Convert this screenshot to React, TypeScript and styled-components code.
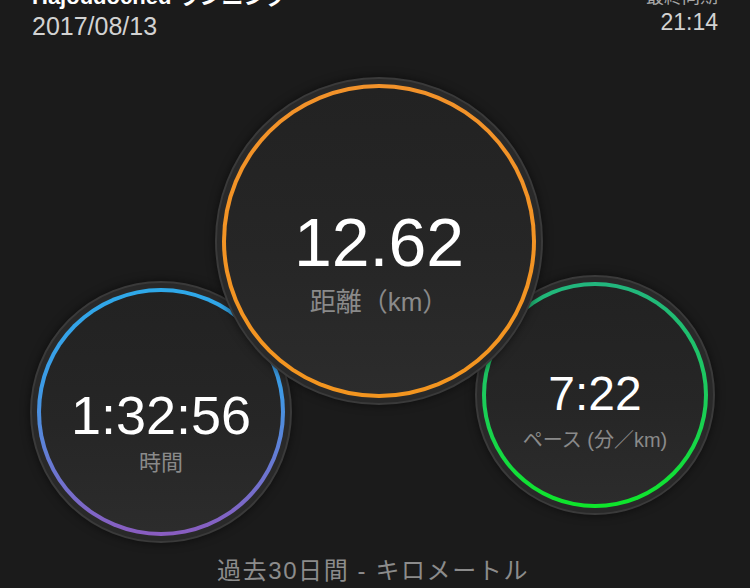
import React from "react";
import styled, { createGlobalStyle } from "styled-components";

const GlobalStyle = createGlobalStyle`
  html, body {
    margin: 0;
    padding: 0;
    background: #1b1b1b;
  }
  body {
    width: 750px;
    height: 588px;
    overflow: hidden;
    font-family: "Liberation Sans", "Noto Sans CJK JP", sans-serif;
  }
`;

const Page = styled.div`
  width: 750px;
  height: 588px;
  background: #1b1b1b;
  display: flex;
  flex-direction: column;
`;

const Header = styled.header`
  display: flex;
  justify-content: space-between;
  padding: 0 32px;
`;

const TitleBlock = styled.div`
  display: flex;
  flex-direction: column;
  margin-top: -16px;
`;

const Title = styled.div`
  font-size: 22px;
  line-height: 26px;
  font-weight: 700;
  color: #ffffff;
`;

const DateText = styled.div`
  margin-top: 2px;
  font-size: 25px;
  line-height: 28px;
  color: #d2d2d2;
`;

const SyncBlock = styled.div`
  display: flex;
  flex-direction: column;
  align-items: flex-end;
  margin-top: -14px;
`;

const SyncLabel = styled.div`
  font-size: 18px;
  line-height: 22px;
  color: #a8a8a8;
`;

const SyncTime = styled.div`
  font-size: 23px;
  line-height: 28px;
  color: #d2d2d2;
`;

const Bubbles = styled.div`
  display: flex;
  align-items: flex-start;
  margin-top: 37px;
  padding-left: 30px;
`;

const Bubble = styled.div<{ $size: number; $top: number; $overlap?: number; $front?: boolean }>`
  flex: none;
  box-sizing: border-box;
  width: ${(p) => p.$size}px;
  height: ${(p) => p.$size}px;
  margin-top: ${(p) => p.$top}px;
  margin-left: ${(p) => -(p.$overlap ?? 0)}px;
  position: relative;
  z-index: ${(p) => (p.$front ? 2 : 1)};
  border-radius: 50%;
  border: 2px solid #3a3a3a;
  padding: 5px;
  background: #292929;
  box-shadow: 0 0 10px rgba(0, 0, 0, 0.55);
`;

const Ring = styled.div<{ $colors: string }>`
  box-sizing: border-box;
  width: 100%;
  height: 100%;
  border-radius: 50%;
  padding: 4px;
  background: ${(p) => p.$colors};
`;

const Face = styled.div<{ $shift: number }>`
  box-sizing: border-box;
  width: 100%;
  height: 100%;
  border-radius: 50%;
  background: linear-gradient(180deg, #222222 0%, #262626 55%, #2c2c2c 100%);
  display: flex;
  flex-direction: column;
  align-items: center;
  justify-content: center;
  padding-top: ${(p) => p.$shift}px;
`;

const Value = styled.div<{ $size: number }>`
  font-size: ${(p) => p.$size}px;
  line-height: 1;
  color: #ffffff;
  white-space: nowrap;
`;

const Label = styled.div<{ $size: number; $gap: number }>`
  margin-top: ${(p) => p.$gap}px;
  font-size: ${(p) => p.$size}px;
  line-height: 1.2;
  color: #8a8a8a;
  white-space: nowrap;
`;

const Caption = styled.div`
  margin-top: 15px;
  text-align: center;
  padding-right: 4px;
  font-size: 24px;
  line-height: 26px;
  letter-spacing: 1.6px;
  color: #8c8c8c;
`;

const BLUE = "linear-gradient(180deg, #2ea9e9 0%, #3d9be6 40%, #6a78d2 72%, #8a5cc0 100%)";
const ORANGE = "linear-gradient(180deg, #f2922a 0%, #f3951f 100%)";
const GREEN = "linear-gradient(180deg, #22b67e 0%, #1ccb5c 50%, #0ee62a 100%)";

export default function App() {
  return (
    <Page>
      <GlobalStyle />
      <Header>
        <TitleBlock>
          <Title>Hajoudoched ランニング</Title>
          <DateText>2017/08/13</DateText>
        </TitleBlock>
        <SyncBlock>
          <SyncLabel>最終同期</SyncLabel>
          <SyncTime>21:14</SyncTime>
        </SyncBlock>
      </Header>

      <Bubbles>
        <Bubble $size={262} $top={204}>
          <Ring $colors={BLUE}>
            <Face $shift={40}>
              <Value $size={54}>1:32:56</Value>
              <Label $size={22} $gap={8}>時間</Label>
            </Face>
          </Ring>
        </Bubble>
        <Bubble $size={328} $top={0} $overlap={77} $front>
          <Ring $colors={ORANGE}>
            <Face $shift={44}>
              <Value $size={68}>12.62</Value>
              <Label $size={26} $gap={11}>距離（km）</Label>
            </Face>
          </Ring>
        </Bubble>
        <Bubble $size={240} $top={198} $overlap={68}>
          <Ring $colors={GREEN}>
            <Face $shift={32}>
              <Value $size={48}>7:22</Value>
              <Label $size={20} $gap={10}>ペース (分／km)</Label>
            </Face>
          </Ring>
        </Bubble>
      </Bubbles>

      <Caption>過去30日間 - キロメートル</Caption>
    </Page>
  );
}
